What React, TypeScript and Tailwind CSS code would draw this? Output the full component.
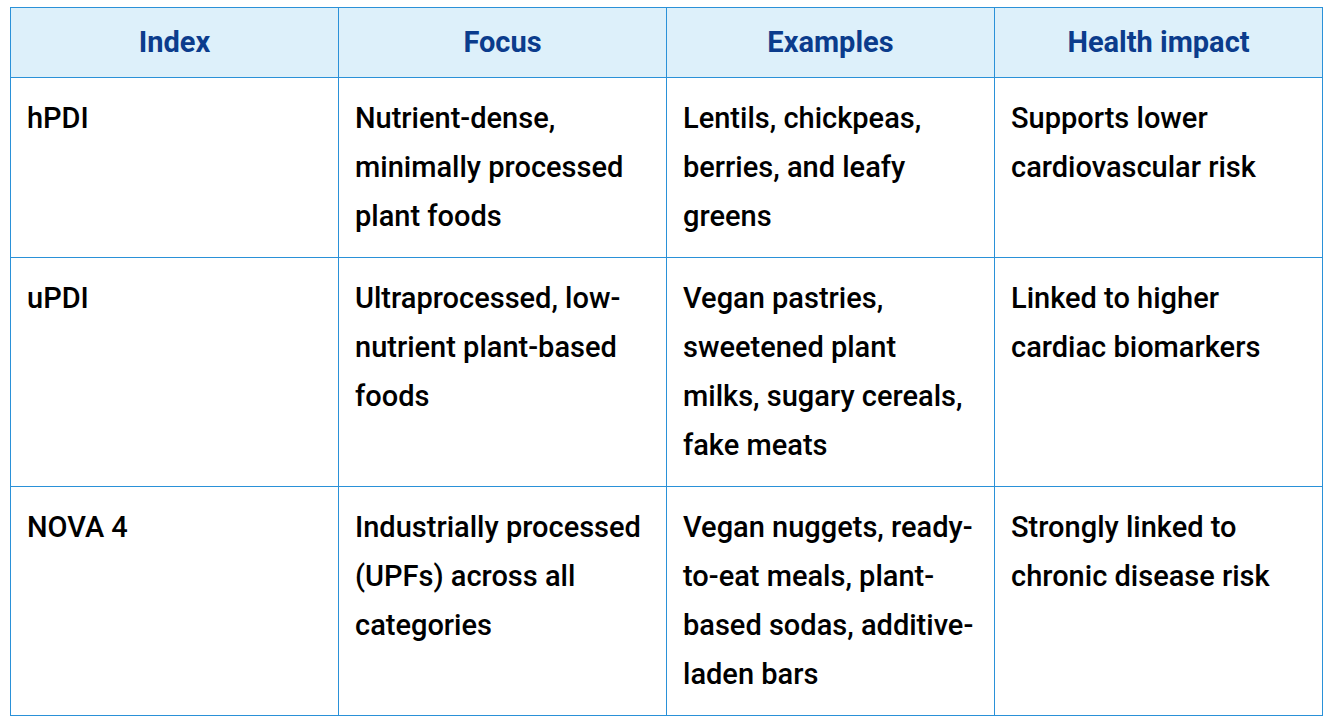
const rows = [
  {
    index: 'hPDI',
    focus: 'Nutrient-dense, minimally processed plant foods',
    examples: 'Lentils, chickpeas, berries, and leafy greens',
    impact: 'Supports lower cardiovascular risk',
  },
  {
    index: 'uPDI',
    focus: 'Ultraprocessed, low-nutrient plant-based foods',
    examples: 'Vegan pastries, sweetened plant milks, sugary cereals, fake meats',
    impact: 'Linked to higher cardiac biomarkers',
  },
  {
    index: 'NOVA 4',
    focus: 'Industrially processed (UPFs) across all categories',
    examples: 'Vegan nuggets, ready-to-eat meals, plant-based sodas, additive-laden bars',
    impact: 'Strongly linked to chronic disease risk',
  },
]

const headers = ['Index', 'Focus', 'Examples', 'Health impact']

export default function App() {
  return (
    <div className="min-h-screen bg-white pt-[7px] pl-[10px] font-['Roboto',sans-serif]">
      <table className="w-[1313px] table-fixed border-collapse">
        <thead>
          <tr>
            {headers.map((h) => (
              <th
                key={h}
                className="h-[70px] border border-[#2a91d8] bg-[#ddf0fa] px-4 text-center text-[29px] font-bold text-[#0b3c8c]"
              >
                {h}
              </th>
            ))}
          </tr>
        </thead>
        <tbody>
          {rows.map((r) => (
            <tr key={r.index}>
              {[r.index, r.focus, r.examples, r.impact].map((c, i) => (
                <td
                  key={i}
                  className="border border-[#2a91d8] px-4 pt-4 pb-4 align-top text-[29px] font-medium leading-[49px] text-black"
                >
                  {c}
                </td>
              ))}
            </tr>
          ))}
        </tbody>
      </table>
    </div>
  )
}
